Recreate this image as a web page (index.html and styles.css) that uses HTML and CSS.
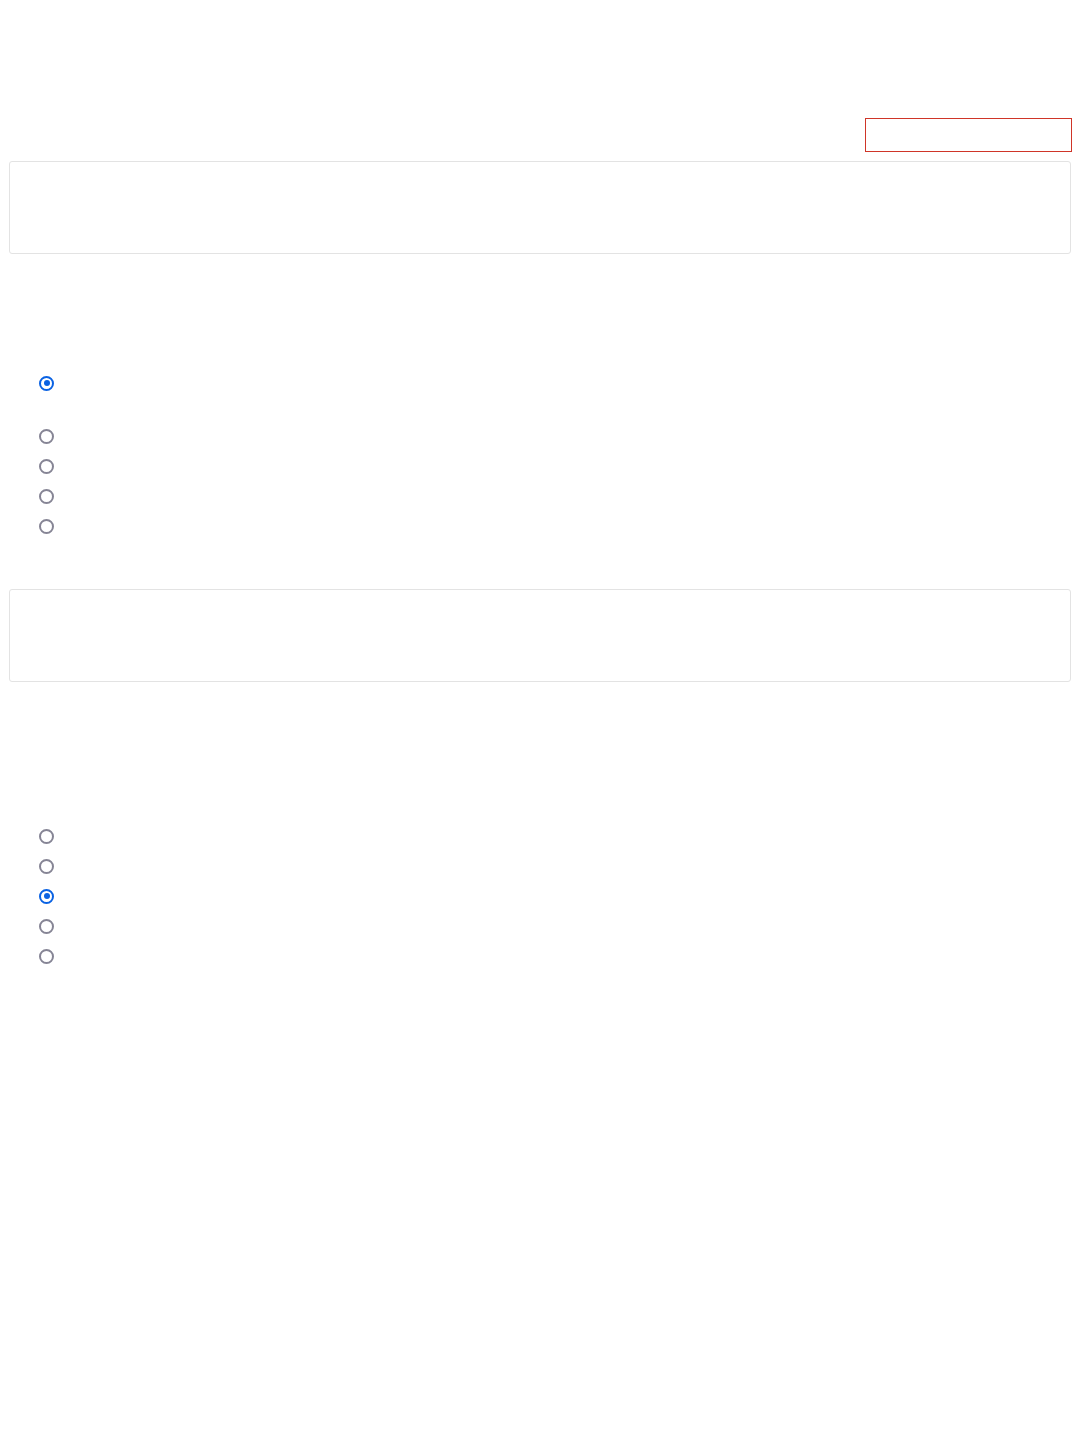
FILE: index.html
```html
<!DOCTYPE html>
<html lang="en">
<head>
<meta charset="utf-8">
<title>Form</title>
<link rel="stylesheet" href="styles.css">
</head>
<body>
<main class="page">
  <div class="topbar">
    <div class="alert-box"></div>
  </div>
  <section class="card"></section>
  <fieldset class="options group-one">
    <label class="option option-expanded"><input type="radio" name="g1" checked></label>
    <label class="option"><input type="radio" name="g1"></label>
    <label class="option"><input type="radio" name="g1"></label>
    <label class="option"><input type="radio" name="g1"></label>
    <label class="option"><input type="radio" name="g1"></label>
  </fieldset>
  <section class="card card-two"></section>
  <fieldset class="options group-two">
    <label class="option"><input type="radio" name="g2"></label>
    <label class="option"><input type="radio" name="g2"></label>
    <label class="option"><input type="radio" name="g2" checked></label>
    <label class="option"><input type="radio" name="g2"></label>
    <label class="option"><input type="radio" name="g2"></label>
  </fieldset>
</main>
</body>
</html>
```
FILE: styles.css
```css
* { box-sizing: border-box; }
html, body { margin: 0; padding: 0; background: #ffffff; }
body { font-family: "Liberation Sans", Arial, sans-serif; }

.page {
  padding: 0 8px;
  display: flex;
  flex-direction: column;
}

.topbar {
  padding-top: 118px;
  display: flex;
  justify-content: flex-end;
}

.alert-box {
  width: 207px;
  height: 34px;
  border: 1px solid #cf3528;
}

.card {
  margin: 9px 1px 0;
  height: 93px;
  border: 1px solid #e3e3e3;
  border-radius: 3px;
  background: #fff;
}

.options {
  border: 0;
  margin: 0;
  padding: 0 0 0 31px;
  display: flex;
  flex-direction: column;
}

.group-one { margin-top: 114px; }
.card-two { margin-top: 48px; }
.group-two { margin-top: 139px; }

.option {
  height: 30px;
  display: flex;
  align-items: center;
}

.option-expanded { margin-bottom: 23px; }

.option input {
  appearance: none;
  -webkit-appearance: none;
  margin: 0;
  width: 15px;
  height: 15px;
  border: 2px solid #868595;
  border-radius: 50%;
  background: #fff;
  display: grid;
  place-items: center;
}

.option input:checked {
  border-color: #0a62e3;
}

.option input:checked::after {
  content: "";
  width: 6px;
  height: 6px;
  border-radius: 50%;
  background: #0a62e3;
}
```
